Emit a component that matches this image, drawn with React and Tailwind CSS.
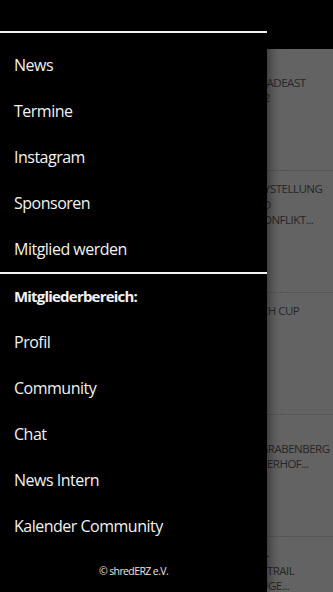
import React from "react";

const menuTop = ["News", "Termine", "Instagram", "Sponsoren", "Mitglied werden"];
const menuMembers = ["Profil", "Community", "Chat", "News Intern", "Kalender Community"];

// news list behind the drawer, only the right edge of each title peeks out
const cards = [
  [["\u00a0", 260], ["RADEAST", 260], ["22", 258]],
  [["YSTELLUNG", 264], ["D", 263], ["ONFLIKT...", 263]],
  [["CH CUP", 261]],
  [["\u00a0", 260], ["GRABENBERG", 260], ["BERHOF...", 260]],
  [["-", 266], ["ETRAIL", 261], ["UGE...", 260]],
];

const MenuItem = ({ label }) => (
  <a href="#" className="flex items-center h-[46px] px-[14px] text-[16px] tracking-[-0.5px] text-[#f2f2f2]">
    {label}
  </a>
);

const Drawer = () => {
  return (
    <div className="absolute left-0 top-0 h-full w-[267px] bg-black flex flex-col shadow-[3px_0_10px_rgba(0,0,0,0.45)]">
      <div className="mt-[31px] h-[2px] bg-[#f2f2f2]" />
      <nav className="flex flex-col pt-[9px]">
        {menuTop.map((m) => (
          <MenuItem key={m} label={m} />
        ))}
      </nav>
      <div className="h-[2px] bg-[#f2f2f2]" />
      <div className="flex items-center h-[45px] px-[14px] text-[15px] font-bold tracking-[-0.8px] text-[#f2f2f2]">
        Mitgliederbereich:
      </div>
      <nav className="flex flex-col">
        {menuMembers.map((m) => (
          <MenuItem key={m} label={m} />
        ))}
      </nav>
      <p className="mt-[14px] text-center text-[10.5px] leading-4 tracking-[-0.6px] text-[#e6e6e6]">
        © shredERZ e.V.
      </p>
    </div>
  );
};

const NewsList = () => {
  return (
    <div className="flex flex-col">
      <div className="h-[49px] bg-black" />
      {cards.map((lines, i) => (
        <div key={i} className="h-[122px] border-b border-[#565656] pt-[10px] flex flex-col">
          {lines.map(([text, left], j) => (
            <span
              key={j}
              className="block whitespace-nowrap text-[11.5px] leading-[15.5px] tracking-[-0.5px] uppercase text-[#262626]"
              style={{ marginLeft: left }}
            >
              {text}
            </span>
          ))}
        </div>
      ))}
    </div>
  );
};

export default function App() {
  return (
    <div
      className="relative w-[333px] h-[592px] overflow-hidden bg-[#636363]"
      style={{ fontFamily: '"Open Sans", sans-serif' }}
    >
      <NewsList />
      <Drawer />
    </div>
  );
}
